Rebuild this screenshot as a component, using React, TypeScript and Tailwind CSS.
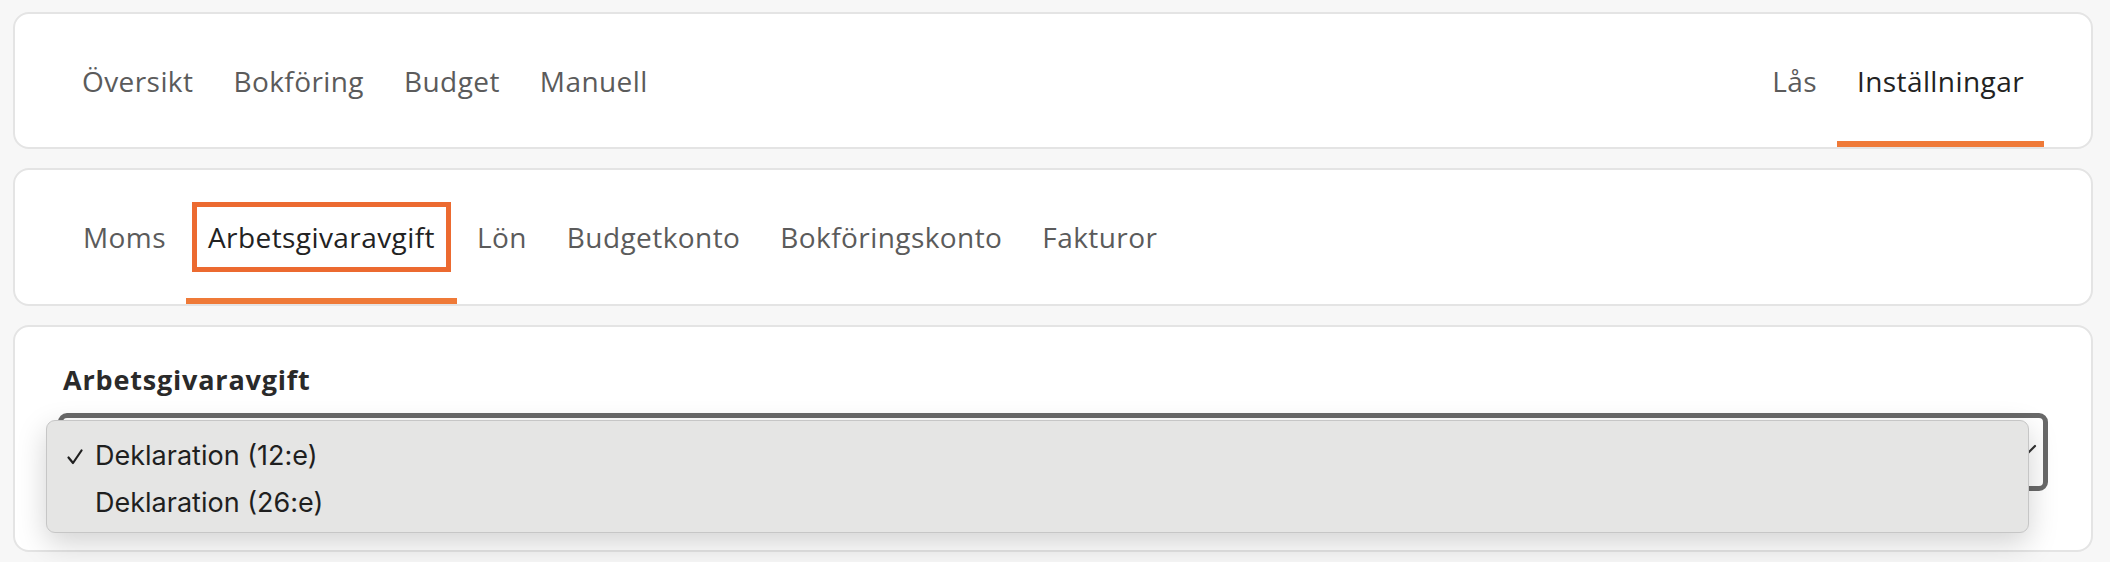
import { useState } from 'react'

const mainTabs = ['Översikt', 'Bokföring', 'Budget', 'Manuell']
const rightTabs = ['Lås', 'Inställningar']
const subTabs = ['Moms', 'Arbetsgivaravgift', 'Lön', 'Budgetkonto', 'Bokföringskonto', 'Fakturor']
const options = ['Deklaration (12:e)', 'Deklaration (26:e)']

function Tab({ label, active, focused }: { label: string; active?: boolean; focused?: boolean }) {
  return (
    <div className="relative flex h-full items-center px-5">
      <span
        className={`flex items-center ${
          focused ? 'h-[70px] -ml-[14px] -mr-[14px] border-[5px] border-[#ec6a30] px-[11px]' : ''
        } ${active ? 'text-[#222222]' : 'text-[#5b5b5b]'}`}
      >
        {label}
      </span>
      {active && <div className="absolute bottom-0 left-0 right-0 h-[6px] bg-[#ef7a38]" />}
    </div>
  )
}

export default function App() {
  const [selected] = useState(0)

  return (
    <div className="flex min-h-[562px] flex-col gap-[19px] bg-[#f7f7f7] pb-[9px] pl-[13px] pr-[17px] pt-[12px] font-['Open_Sans',sans-serif]">
      <div className="flex h-[137px] items-stretch justify-between rounded-[16px] border-2 border-[#e4e4e4] bg-white px-[47px] text-[28px] tracking-[0.015em]">
        <div className="flex items-stretch">
          {mainTabs.map((t) => (
            <Tab key={t} label={t} />
          ))}
        </div>
        <div className="flex items-stretch">
          {rightTabs.map((t) => (
            <Tab key={t} label={t} active={t === 'Inställningar'} />
          ))}
        </div>
      </div>

      <div className="flex h-[138px] items-stretch rounded-[16px] border-2 border-[#e4e4e4] bg-white px-[48px] text-[28px] tracking-[0.015em]">
        {subTabs.map((t) => (
          <Tab key={t} label={t} active={t === 'Arbetsgivaravgift'} focused={t === 'Arbetsgivaravgift'} />
        ))}
      </div>

      <div className="flex h-[227px] flex-col rounded-[16px] border-2 border-[#e4e4e4] bg-white px-[43px] pt-[36px]">
        <div className="pl-[5px] text-[27px] font-bold leading-[34px] tracking-[0.03em] text-[#2a2a2a]">
          Arbetsgivaravgift
        </div>
        <div className="relative mt-[16px] h-[78px] rounded-[9px] border-[5px] border-[#696969] bg-white">
          <svg className="absolute right-[6px] top-[26px]" width="22" height="14" viewBox="0 0 22 14">
            <path d="M2 2 L11 11 L20 2" fill="none" stroke="#333" strokeWidth="2.2" strokeLinecap="round" />
          </svg>
          <div className="absolute -left-[17px] right-[14px] top-[2px] h-[113px] rounded-[9px] border border-[#c6c6c6] bg-[#e5e5e4] pt-[12px] font-['Inter',sans-serif] text-[27px] text-[#1f1f1f] shadow-[0_10px_30px_rgba(0,0,0,0.18)]">
            {options.map((o, i) => (
              <div key={o} className="flex h-[47px] items-center">
                <span className="flex w-[48px] shrink-0 pl-[20px]">
                  {i === selected && (
                    <svg width="16" height="16" viewBox="0 0 16 16">
                      <path d="M1.5 8.5 L6 14 L14.5 1.5" fill="none" stroke="#1f1f1f" strokeWidth="2.2" strokeLinecap="round" strokeLinejoin="round" />
                    </svg>
                  )}
                </span>
                <span>{o}</span>
              </div>
            ))}
          </div>
        </div>
      </div>
    </div>
  )
}
